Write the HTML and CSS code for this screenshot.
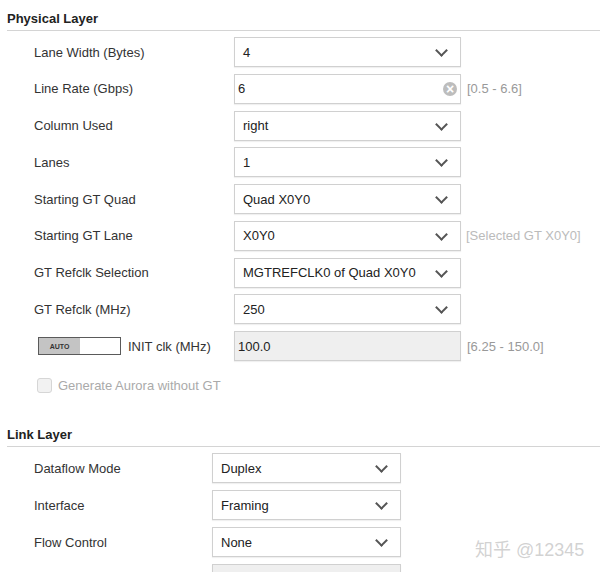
FILE: index.html
```html
<!DOCTYPE html>
<html lang="en">
<head>
    <meta charset="UTF-8">
    <title>Aurora Settings</title>
    <link rel="stylesheet" href="styles.css">
</head>
<body>
    <div class="page">
        <h2 class="section-title">Physical Layer</h2>
        <div class="rows phys">
            <div class="row">
                <span class="label">Lane Width (Bytes)</span>
                <div class="box select">4<span class="chev"></span></div>
            </div>
            <div class="row">
                <span class="label">Line Rate (Gbps)</span>
                <div class="box input">6<span class="clear">&times;</span></div>
                <span class="hint">[0.5 - 6.6]</span>
            </div>
            <div class="row">
                <span class="label">Column Used</span>
                <div class="box select">right<span class="chev"></span></div>
            </div>
            <div class="row">
                <span class="label">Lanes</span>
                <div class="box select">1<span class="chev"></span></div>
            </div>
            <div class="row">
                <span class="label">Starting GT Quad</span>
                <div class="box select">Quad X0Y0<span class="chev"></span></div>
            </div>
            <div class="row">
                <span class="label">Starting GT Lane</span>
                <div class="box select">X0Y0<span class="chev"></span></div>
                <span class="hint light">[Selected GT X0Y0]</span>
            </div>
            <div class="row">
                <span class="label">GT Refclk Selection</span>
                <div class="box select">MGTREFCLK0 of Quad X0Y0<span class="chev"></span></div>
            </div>
            <div class="row">
                <span class="label">GT Refclk (MHz)</span>
                <div class="box select">250<span class="chev"></span></div>
            </div>
            <div class="row">
                <span class="label with-toggle">
                    <span class="toggle"><span class="toggle-on">AUTO</span></span>
                    INIT clk (MHz)
                </span>
                <div class="box input disabled">100.0</div>
                <span class="hint">[6.25 - 150.0]</span>
            </div>
        </div>

        <label class="check">
            <span class="checkbox"></span>
            Generate Aurora without GT
        </label>

        <h2 class="section-title link-title">Link Layer</h2>
        <div class="rows link">
            <div class="row">
                <span class="label">Dataflow Mode</span>
                <div class="box select">Duplex<span class="chev"></span></div>
            </div>
            <div class="row">
                <span class="label">Interface</span>
                <div class="box select">Framing<span class="chev"></span></div>
            </div>
            <div class="row">
                <span class="label">Flow Control</span>
                <div class="box select">None<span class="chev"></span></div>
            </div>
            <div class="row">
                <span class="label"></span>
                <div class="box input disabled"></div>
            </div>
        </div>
    </div>
    <div class="watermark">知乎 @12345</div>
</body>
</html>
```

FILE: styles.css
```css
body {
    margin: 0;
    font-family: "Liberation Sans", Arial, sans-serif;
    font-size: 13px;
    color: #333;
    background-color: #fff;
    overflow: hidden;
}

.page {
    padding: 11px 0 0 7px;
}

.section-title {
    margin: 0;
    font-size: 13px;
    line-height: 16px;
    font-weight: bold;
    color: #222;
    padding-bottom: 3px;
    border-bottom: 1px solid #d4d4d4;
}

.link-title {
    margin-top: 33px;
}

.rows {
    display: flex;
    flex-direction: column;
    gap: 6.75px;
    padding: 6px 0 0 27px;
}

.rows.link {
    gap: 7px;
    padding-top: 6px;
}

.row {
    display: grid;
    grid-template-columns: 200px 227px auto;
    align-items: center;
    height: 30px;
}

.link .row {
    grid-template-columns: 178px 189px auto;
}

.label {
    white-space: nowrap;
}

.with-toggle {
    display: flex;
    align-items: center;
    gap: 7px;
    padding-left: 4px;
}

.toggle {
    display: flex;
    width: 81px;
    height: 16px;
    border: 1px solid #5a5a5a;
    background-color: #fff;
}

.toggle-on {
    width: 41px;
    background-color: #c4c4c4;
    font-size: 7px;
    font-weight: bold;
    color: #333;
    display: flex;
    align-items: center;
    justify-content: center;
}

.box {
    position: relative;
    box-sizing: border-box;
    height: 30px;
    border: 1px solid #d0d0d0;
    box-shadow: 0 1px 1px rgba(0, 0, 0, 0.06);
    background-color: #fff;
    display: flex;
    align-items: center;
    padding-left: 8px;
    color: #222;
}

.box.input {
    padding-left: 3px;
}

.box.disabled {
    background-color: #efefef;
}

.chev {
    position: absolute;
    right: 14px;
    top: 8px;
    width: 7px;
    height: 7px;
    border-right: 2.5px solid #555;
    border-bottom: 2.5px solid #555;
    transform: rotate(45deg);
}

.clear {
    position: absolute;
    right: 3px;
    top: 7px;
    width: 14px;
    height: 14px;
    border-radius: 50%;
    background-color: #bdbdbd;
    color: #fff;
    font-size: 14px;
    font-weight: bold;
    line-height: 14px;
    text-align: center;
}

.hint {
    padding-left: 6px;
    color: #999;
    white-space: nowrap;
}

.hint.light {
    color: #bbb;
    padding-left: 5px;
}

.check {
    display: flex;
    align-items: center;
    gap: 6px;
    margin: 15px 0 0 30px;
    color: #aaa;
    height: 18px;
}

.checkbox {
    width: 13px;
    height: 13px;
    border: 1px solid #d6d6d6;
    border-radius: 3px;
    background-color: #f2f2f2;
}

.watermark {
    position: absolute;
    left: 475px;
    top: 535px;
    font-family: "Liberation Sans", "Noto Sans CJK SC", sans-serif;
    font-size: 18px;
    color: rgba(180, 180, 180, 0.6);
}
```
